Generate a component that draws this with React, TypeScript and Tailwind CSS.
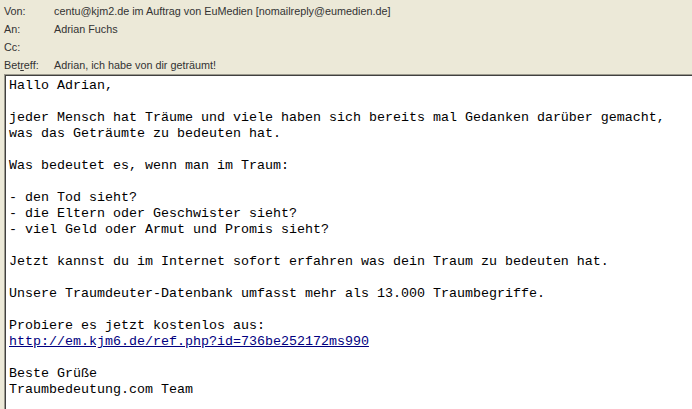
const headers: [React.ReactNode, string][] = [
  ["Von:", "centu@kjm2.de im Auftrag von EuMedien [nomailreply@eumedien.de]"],
  ["An:", "Adrian Fuchs"],
  ["Cc:", ""],
  [
    <>
      Bet<u>r</u>eff:
    </>,
    "Adrian, ich habe von dir geträumt!",
  ],
];

const lines = [
  "Hallo Adrian,",
  "",
  "jeder Mensch hat Träume und viele haben sich bereits mal Gedanken darüber gemacht,",
  "was das Geträumte zu bedeuten hat.",
  "",
  "Was bedeutet es, wenn man im Traum:",
  "",
  "- den Tod sieht?",
  "- die Eltern oder Geschwister sieht?",
  "- viel Geld oder Armut und Promis sieht?",
  "",
  "Jetzt kannst du im Internet sofort erfahren was dein Traum zu bedeuten hat.",
  "",
  "Unsere Traumdeuter-Datenbank umfasst mehr als 13.000 Traumbegriffe.",
  "",
  "Probiere es jetzt kostenlos aus:",
];

const App = () => {
  return (
    <div className="w-[692px] h-[409px] overflow-hidden bg-[#ece9d8] flex flex-col">
      {/* Header */}
      <div className="pt-[2px] font-['Liberation_Sans',sans-serif] text-[10.8px] text-[#333]">
        {headers.map(([label, value], i) => (
          <div key={i} className="flex h-[18px] items-center">
            <div className="w-[54px] pl-[4px]">{label}</div>
            <div>{value}</div>
          </div>
        ))}
      </div>

      {/* Body */}
      <div className="flex-1 ml-[4px] border-t border-l border-[#9c9a8e]">
        <div className="h-full border-t border-l border-[#404040] bg-white pl-[3px] pt-[2px] font-['Liberation_Mono',monospace] text-[13.33px] leading-[16px] text-black whitespace-pre">
          {lines.map((l, i) => (
            <div key={i} className="h-[16px]">
              {l}
            </div>
          ))}
          <div className="h-[16px]">
            <a className="text-[#000080] underline">http://em.kjm6.de/ref.php?id=736be252172ms990</a>
          </div>
          <div className="h-[16px]"></div>
          <div className="h-[16px]">Beste Grüße</div>
          <div className="h-[16px]">Traumbedeutung.com Team</div>
        </div>
      </div>
    </div>
  );
};

export default App;
